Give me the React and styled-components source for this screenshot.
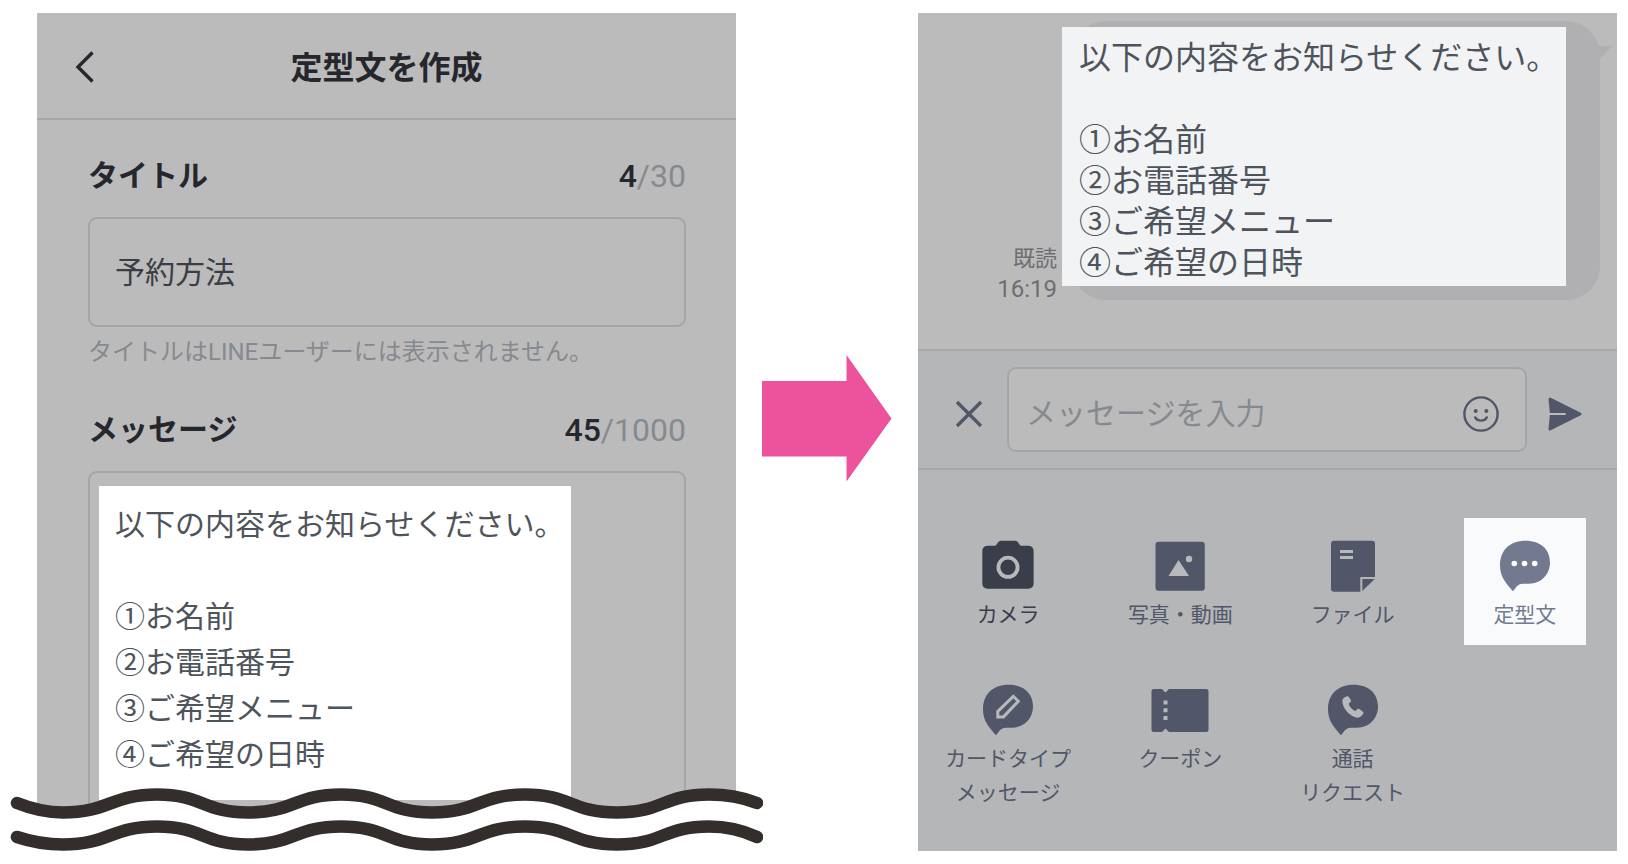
import React from 'react';
import styled, { createGlobalStyle } from 'styled-components';

const GlobalStyle = createGlobalStyle`
  * {
    box-sizing: border-box;
  }

  body {
    margin: 0;
    background-color: #ffffff;
  }

  body, button, input, textarea {
    font-family: Roboto, 'Noto Sans CJK JP', sans-serif;
  }
`;

const Page = styled.main`
  display: flex;
  min-height: 100vh;
  padding: 13px 11px 13px 37px;
`;

const Panel = styled.section`
  position: relative;
  display: flex;
  flex-direction: column;
  flex: 1;
  min-width: 0;
  background-color: #bbbbbb;
`;

const IconButton = styled.button`
  display: flex;
  padding: 0;
  border: none;
  background: none;
  color: ${(props) => props.$color || '#515668'};
  cursor: pointer;
`;

/* ---- 定型文の作成画面 ---- */

const Header = styled.header`
  display: grid;
  grid-template-columns: 60px 1fr 60px;
  align-items: center;
  height: 107px;
  padding: 4px 37px 0;
  border-bottom: 2px solid #a5a8aa;
`;

const HeaderTitle = styled.h1`
  margin: 0;
  color: #25272d;
  font-size: 32px;
  font-weight: 700;
  line-height: 46px;
  text-align: center;
`;

const Form = styled.form`
  display: flex;
  flex-direction: column;
  flex: 1;
  padding: 36px 50px 0 51px;
`;

const FieldHead = styled.div`
  display: flex;
  justify-content: space-between;
  align-items: center;
  height: 40px;
  margin-bottom: 21px;
`;

const FieldLabel = styled.label`
  color: #25272d;
  font-size: 30px;
  font-weight: 700;
  line-height: 40px;
`;

const Counter = styled.span`
  color: #868a90;
  font-size: 32px;
  line-height: 40px;
`;

const Count = styled.span`
  color: #25272d;
  font-weight: 500;
`;

const TitleInput = styled.input`
  width: 100%;
  height: 110px;
  padding: 0 25px 4px;
  border: 2px solid #a4a5a6;
  border-radius: 9px;
  background: none;
  color: #3a3e44;
  font-size: 30px;
  outline: none;
`;

const Help = styled.p`
  margin: 9px 0 42px;
  color: #868a90;
  font-size: 24px;
  line-height: 32px;
`;

const MessageBox = styled.div`
  flex: 1;
  padding: 13px 9px 0;
  border: 2px solid #a4a5a6;
  border-bottom: none;
  border-radius: 9px 9px 0 0;
`;

const MessageInput = styled.textarea`
  display: block;
  width: 472px;
  max-width: 100%;
  padding: 16px 0 22px 16px;
  border: none;
  background-color: #ffffff;
  color: #4e545b;
  font-size: 30px;
  line-height: 46px;
  resize: none;
  outline: none;
  overflow: hidden;
`;

const Wave = styled.svg`
  position: absolute;
  left: -27px;
  bottom: -1px;
  width: calc(100% + 54px);
  height: 66px;
`;

const Arrow = styled.svg`
  flex: none;
  align-self: center;
  width: 130px;
  height: 127px;
  margin: 0 26px 27px;
`;

/* ---- チャット画面 ---- */

const Chat = styled.div`
  display: flex;
  justify-content: flex-end;
  align-items: flex-end;
  gap: 15px;
  padding: 8px 17px 49px;
`;

const Meta = styled.div`
  margin-bottom: -4px;
  color: #6c6e72;
  font-size: 24px;
  line-height: 30px;
  text-align: right;
`;

const ReadMark = styled.div`
  font-size: 22px;
`;

const Bubble = styled.div`
  position: relative;
  width: 528px;
  padding: 6px 34px 14px 0;
  border-radius: 34px;
  background-color: #b0b0b2;
`;

const BubbleTail = styled.svg`
  position: absolute;
  top: 25px;
  right: -12px;
  width: 14px;
  height: 14px;
`;

const BubbleText = styled.p`
  margin: 0 0 0 -10px;
  padding: 11px 0 2px 17px;
  background-color: #f2f3f5;
  color: #4e545b;
  font-size: 32px;
  line-height: 41px;
  white-space: pre-line;
`;

const InputBar = styled.form`
  display: flex;
  align-items: center;
  gap: 19px;
  padding: 16px 33px 16px 32px;
  border: solid #a5a8aa;
  border-width: 2px 0;
  background-color: #b4b6b8;

  > button {
    padding-top: 8px;
  }
`;

const ChatField = styled.div`
  display: flex;
  align-items: center;
  flex: 1;
  height: 85px;
  padding: 8px 25px 0 17px;
  border: 2px solid #a4a6a6;
  border-radius: 9px;
  background-color: #bbbbbb;
`;

const ChatInput = styled.input`
  flex: 1;
  min-width: 0;
  padding: 0;
  border: none;
  background: none;
  color: #3a3e44;
  font-size: 30px;
  outline: none;

  &::placeholder {
    color: #868a90;
    opacity: 1;
  }
`;

const Menu = styled.nav`
  display: grid;
  grid-template-columns: repeat(4, 1fr);
  row-gap: 17px;
  flex: 1;
  align-content: start;
  padding: 48px 6px 28px 4px;
  background-color: #b4b6b8;
`;

const MenuButton = styled.button`
  display: flex;
  flex-direction: column;
  align-items: center;
  justify-self: center;
  gap: 4px;
  min-width: 122px;
  padding: 20px 0 13px;
  border: none;
  background-color: ${(props) => (props.$active ? '#f8fafc' : 'transparent')};
  color: ${(props) => props.$color || '#515668'};
  font-size: 21px;
  line-height: 34px;
  white-space: pre;
  cursor: pointer;
`;

const MenuIcon = styled.svg`
  width: 60px;
  height: 56px;
  fill: currentColor;
`;

const LIGHT = '#b8b9ba';
const BALLOON =
  'M30.5 2.7C46 2.7 55 11.5 55 24.5C55 36.5 46 45.7 34 45.7H27.5C23.5 45.7 21.5 48.5 18 53.3C12 46.5 5 39.5 5 27.5C5 12.5 14.5 2.7 30.5 2.7Z';

const icons = {
  camera: (
    <>
      <path d="M9.3 7.7H17C19 7.7 19.5 2.7 23 2.7H37C40.5 2.7 41 7.7 43 7.7H50.6A5 5 0 0 1 55.6 12.7V45.7A5 5 0 0 1 50.6 50.7H9.3A5 5 0 0 1 4.3 45.7V12.7A5 5 0 0 1 9.3 7.7Z" />
      <circle cx="30" cy="29.3" r="9.6" fill="none" stroke={LIGHT} strokeWidth="3.8" />
    </>
  ),
  photo: (
    <>
      <rect x="5.5" y="3.7" width="49.3" height="49" rx="3" />
      <path d="M18.5 38L28.5 22L39 38Z" fill={LIGHT} />
      <circle cx="39" cy="21" r="3.2" fill={LIGHT} />
    </>
  ),
  file: (
    <>
      <path d="M11 2.7H49A3 3 0 0 1 52 5.7V39H37.3V53.7H11A3 3 0 0 1 8 50.7V5.7A3 3 0 0 1 11 2.7Z" />
      <path d="M17 12H30V15H17ZM17 18H30V21H17Z" fill={LIGHT} />
      <path d="M39.3 41H51.7L39.3 53Z" />
    </>
  ),
  template: (
    <>
      <path d={BALLOON} />
      <g fill="#ffffff">
        <circle cx="19.3" cy="25.5" r="2.8" />
        <circle cx="29.5" cy="25.5" r="2.8" />
        <circle cx="39.7" cy="25.5" r="2.8" />
      </g>
    </>
  ),
  card: (
    <>
      <path d={BALLOON} />
      <path d="M19.8 34.9V29.3L35.3 14.3L40.3 19.3L25.4 34.9Z" fill="none" stroke={LIGHT} strokeWidth="3" />
    </>
  ),
  coupon: (
    <>
      <path d="M4 7H12L15.5 10.5L19 7H56A2.5 2.5 0 0 1 58.5 9.5V47.5A2.5 2.5 0 0 1 56 50H19L15.5 46.5L12 50H4A2.5 2.5 0 0 1 1.5 47.5V9.5A2.5 2.5 0 0 1 4 7Z" />
      <path d="M13.5 18.5H17.5V22.5H13.5ZM13.5 26.3H17.5V30.3H13.5ZM13.5 34H17.5V38H13.5Z" fill={LIGHT} />
    </>
  ),
  call: (
    <>
      <path d={BALLOON} />
      <path
        d="M19.3 18.7C19.5 17 21.5 14.8 24 14.3C24.8 14.2 25.4 14.5 25.8 15.1L27.8 18C28.2 18.8 28.1 19.5 27.5 20L25.7 21.7C26.3 24.5 29.5 28 32.3 29L34.3 27.2C35 26.7 35.6 26.7 36.2 27.1L39.7 29.5C40.5 30.2 40.6 31 40.2 31.8C39 34.2 36.8 35.7 34.3 35.7C26.5 34.5 19.2 26 19.3 18.7Z"
        fill={LIGHT}
      />
    </>
  ),
};

const menuItems = [
  { icon: 'camera', label: 'カメラ', color: '#3a3e4a' },
  { icon: 'photo', label: '写真・動画' },
  { icon: 'file', label: 'ファイル' },
  { icon: 'template', label: '定型文', color: '#737a90', active: true },
  { icon: 'card', label: 'カードタイプ\nメッセージ' },
  { icon: 'coupon', label: 'クーポン' },
  { icon: 'call', label: '通話\nリクエスト' },
];

const message = `以下の内容をお知らせください。

①お名前
②お電話番号
③ご希望メニュー
④ご希望の日時`;

const WAVE_TOP =
  'M17 17C32 23 45 26.5 63 26.5C109 26.5 111 8.5 157 8.5C203 8.5 203 26.5 248 26.5C294 26.5 295 8.5 341 8.5C387 8.5 387 26.5 432 26.5C478 26.5 479 8.5 525 8.5C571 8.5 571 26.5 617 26.5C663 26.5 663 8.5 709 8.5C727 8.5 742 11 757 17';
const WAVE_BOTTOM =
  'M17 51C32 56 45 58.5 63 58.5C109 58.5 111 40.5 157 40.5C203 40.5 203 58.5 248 58.5C294 58.5 295 40.5 341 40.5C387 40.5 387 58.5 432 58.5C478 58.5 479 40.5 525 40.5C571 40.5 571 58.5 617 58.5C663 58.5 663 40.5 709 40.5C727 40.5 742 44 757 51';

const CreateTemplate = () => {
  const [title, setTitle] = React.useState('予約方法');
  const [text, setText] = React.useState(message);

  return (
    <Panel>
      <Header>
        <IconButton type="button" aria-label="戻る" $color="#25272d">
          <svg width="24" height="34" viewBox="0 0 24 34" fill="none" stroke="currentColor" strokeWidth="3.4">
            <path d="M18.5 1.5L4 16L18.5 30.500" />
          </svg>
        </IconButton>
        <HeaderTitle>定型文を作成</HeaderTitle>
      </Header>
      <Form>
        <FieldHead>
          <FieldLabel htmlFor="title">タイトル</FieldLabel>
          <Counter><Count>{title.length}</Count>/30</Counter>
        </FieldHead>
        <TitleInput id="title" value={title} onChange={(e) => setTitle(e.target.value)} />
        <Help>タイトルはLINEユーザーには表示されません。</Help>
        <FieldHead>
          <FieldLabel htmlFor="message">メッセージ</FieldLabel>
          <Counter><Count>45</Count>/1000</Counter>
        </FieldHead>
        <MessageBox>
          <MessageInput id="message" rows={6} value={text} onChange={(e) => setText(e.target.value)} />
        </MessageBox>
      </Form>
      <Wave viewBox="10 0 753 66" preserveAspectRatio="none" aria-hidden="true">
        <path d={`${WAVE_TOP}V66H17Z`} fill="#ffffff" />
        <g fill="none" stroke="#332d2b" strokeWidth="12.6" strokeLinecap="round">
          <path d={WAVE_TOP} />
          <path d={WAVE_BOTTOM} />
        </g>
      </Wave>
    </Panel>
  );
};

const ChatScreen = () => (
  <Panel>
    <Chat>
      <Meta>
        <ReadMark>既読</ReadMark>
        <time>16:19</time>
      </Meta>
      <Bubble>
        <BubbleTail viewBox="0 0 14 14" fill="#b0b0b2">
          <path d="M0 0H14L2 13Z" />
        </BubbleTail>
        <BubbleText>{message}</BubbleText>
      </Bubble>
    </Chat>
    <InputBar>
      <IconButton type="button" aria-label="閉じる">
        <svg width="38" height="38" viewBox="0 0 38 38" fill="none" stroke="currentColor" strokeWidth="3.3">
          <path d="M7 7L31 31M31 7L7 31" />
        </svg>
      </IconButton>
      <ChatField>
        <ChatInput aria-label="メッセージ" placeholder="メッセージを入力" />
        <IconButton type="button" aria-label="スタンプ">
          <svg width="38" height="38" viewBox="0 0 38 38" fill="none" stroke="currentColor" strokeWidth="2.4">
            <circle cx="19" cy="19" r="16.6" />
            <path d="M13.2 22.4C15.5 26.7 22.5 26.7 24.8 22.4" strokeLinecap="round" />
            <circle cx="13.7" cy="16" r="2" fill="currentColor" stroke="none" />
            <circle cx="24.3" cy="16" r="2" fill="currentColor" stroke="none" />
          </svg>
        </IconButton>
      </ChatField>
      <IconButton type="button" aria-label="送信">
        <svg width="38" height="38" viewBox="0 0 38 38" fill="currentColor" stroke="currentColor" strokeLinejoin="round">
          <path d="M4 4.2L34 19L4 34L5.5 19Z" strokeWidth="3" />
          <path d="M3 19H19.7" stroke={LIGHT} strokeWidth="2" />
        </svg>
      </IconButton>
    </InputBar>
    <Menu>
      {menuItems.map((item) => (
        <MenuButton key={item.icon} type="button" $color={item.color} $active={item.active}>
          <MenuIcon viewBox="0 0 60 56">{icons[item.icon]}</MenuIcon>
          {item.label}
        </MenuButton>
      ))}
    </Menu>
  </Panel>
);

const App = () => (
  <>
    <GlobalStyle />
    <Page>
      <CreateTemplate />
      <Arrow viewBox="0 0 130 127" fill="#ec539c" aria-hidden="true">
        <path d="M0 26H84.5V0L129.5 63.5L84.5 126.5V101.5H0Z" />
      </Arrow>
      <ChatScreen />
    </Page>
  </>
);

export default App;
